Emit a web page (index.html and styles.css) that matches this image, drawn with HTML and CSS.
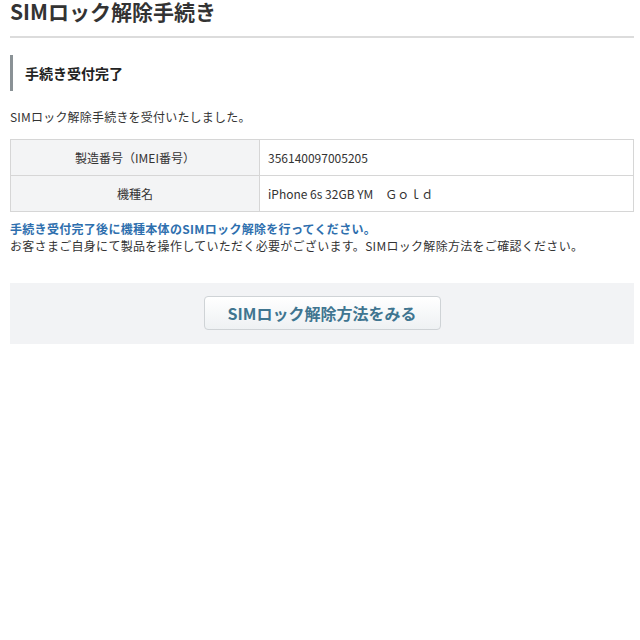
FILE: index.html
```html
<!DOCTYPE html>
<html lang="ja">
<head>
    <meta charset="UTF-8">
    <title>SIMロック解除手続き</title>
    <link rel="stylesheet" href="styles.css">
</head>
<body>

<div class="page">
    <!-- ページタイトル -->
    <h1 class="page-title">SIMロック解除手続き</h1>

    <!-- 見出し -->
    <h2 class="section-title">手続き受付完了</h2>

    <p class="lead">SIMロック解除手続きを受付いたしました。</p>

    <!-- 受付内容 -->
    <table class="info-table">
        <tr>
            <th>製造番号（IMEI番号）</th>
            <td>356140097005205</td>
        </tr>
        <tr>
            <th>機種名</th>
            <td>iPhone 6s 32GB YM　Ｇｏｌｄ</td>
        </tr>
    </table>

    <p class="notice">
        <strong class="notice-strong">手続き受付完了後に機種本体のSIMロック解除を行ってください。</strong><br>
        お客さまご自身にて製品を操作していただく必要がございます。SIMロック解除方法をご確認ください。
    </p>

    <!-- ボタン -->
    <div class="btn-area">
        <a class="btn" href="#">SIMロック解除方法をみる</a>
    </div>
</div>

</body>
</html>
```

FILE: styles.css
```css
body, html {
    margin: 0;
    padding: 0;
    background: #fff;
}

body {
    font-family: "Noto Sans CJK JP", "Liberation Sans", sans-serif;
    color: #333;
    font-size: 12px;
}

.page {
    padding: 0 6px 0 10px;
}

/* タイトル */
.page-title {
    margin: 0;
    padding-bottom: 14px;
    font-size: 21px;
    line-height: 22px;
    font-weight: bold;
    color: #333;
    border-bottom: 2px solid #dcdcdc;
}

.section-title {
    margin: 17px 0 0;
    padding: 0 0 0 12px;
    border-left: 3px solid #8a9296;
    font-size: 14px;
    line-height: 36px;
    font-weight: bold;
    color: #222;
}

.lead {
    margin: 17px 0 0;
    line-height: 18px;
    letter-spacing: 0.2px;
}

.info-table {
    width: 100%;
    margin-top: 13px;
    border-collapse: collapse;
}

.info-table th,
.info-table td {
    border: 1px solid #d6d6d6;
    height: 35px;
    padding: 0 8px;
    font-size: 12px;
}

.info-table th {
    width: 232px;
    background: #f3f4f5;
    font-weight: normal;
    text-align: center;
}

.info-table td {
    text-align: left;
}

.notice {
    margin: 8px 0 0;
    line-height: 17px;
    letter-spacing: 0.3px;
}

.notice-strong {
    color: #2e6fae;
}

.btn-area {
    margin-top: 29px;
    padding: 13px 0 14px;
    background: #f2f3f5;
    text-align: center;
}

.btn {
    display: inline-block;
    width: 235px;
    height: 32px;
    line-height: 32px;
    border: 1px solid #cfd3d6;
    border-radius: 4px;
    background: linear-gradient(#ffffff, #eef1f3);
    color: #3f7590;
    font-size: 16px;
    font-weight: bold;
    text-decoration: none;
}
```
